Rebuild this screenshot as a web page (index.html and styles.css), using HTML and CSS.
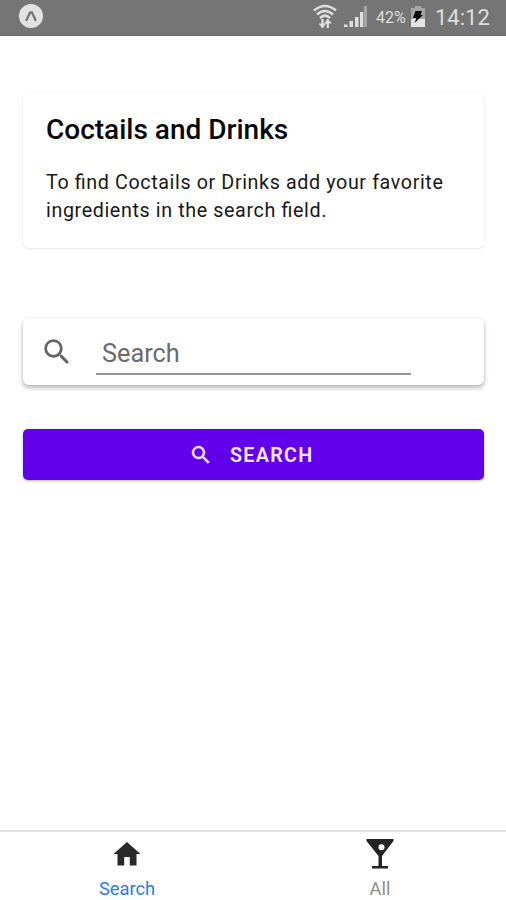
FILE: index.html
```html
<!DOCTYPE html>
<html lang="en">
<head>
<meta charset="utf-8">
<title>Coctails and Drinks</title>
<link rel="stylesheet" href="styles.css">
</head>
<body>
<div class="app">
  <header class="status">
    <svg class="logo" width="26" height="26" viewBox="0 0 26 26"><circle cx="13" cy="13" r="12" fill="#e2e2e2"/><path d="M8.500 17 12 9.500h2L17.500 17" fill="none" stroke="#757575" stroke-width="2.300" stroke-linecap="round" stroke-linejoin="round"/></svg>
    <svg class="wifi" width="24" height="26" viewBox="0 0 24 26" fill="none" stroke="#dedede" stroke-width="2.600"><path d="M1 6.500Q12-2.500 23 6.500M4 10.500q8-7 16 0M7 14q5-4.600 10 0"/><path d="M9.500 15v8M14.800 24v-8" stroke-width="2.300"/><path d="m5.500 19.500 4 5 3.500-5zM11.300 19.500l3.500-5 4 5z" fill="#dedede" stroke="none"/></svg>
    <svg class="signal" width="24" height="22" viewBox="0 0 24 22" fill="#dedede"><path d="M0 18.500h3.500V21H0zM5.500 15h3.500v6H5.500zM11 11h3.500v10H11zM16 6h3.300v15H16z"/><path d="M19.800 0H23v21h-3.200z" fill="#a5a5a5"/></svg>
    <span class="percent">42%</span>
    <svg class="battery" width="16" height="22" viewBox="0 0 16 22"><path d="M5 0h6v2h4v19H1V2h4z" fill="#a5a5a5"/><path d="M1 13h14v8H1z" fill="#e4e4e4"/><path d="M5.500 5H12l-1.500 4H13L4.500 17l2-5H3z" fill="#080808"/></svg>
    <span class="clock">14:12</span>
  </header>
  <main class="content">
    <section class="card">
      <h1 class="title">Coctails and Drinks</h1>
      <p class="text">To find Coctails or Drinks add your favorite<br>ingredients in the search field.</p>
    </section>
    <div class="searchbar">
      <svg width="34" height="34" viewBox="0 0 24 24" fill="#666"><path d="M15.5 14h-.79l-.28-.27A6.47 6.47 0 0 0 16 9.5 6.5 6.5 0 1 0 9.5 16c1.61 0 3.09-.59 4.23-1.57l.27.28v.79l5 4.99L20.49 19zm-6 0C7.01 14 5 11.99 5 9.5S7.01 5 9.5 5 14 7.01 14 9.5 11.99 14 9.5 14z"/></svg>
      <div class="field">Search</div>
    </div>
    <div class="button" role="button">
      <svg width="24" height="24" viewBox="0 0 24 24" fill="#f1e8ff" stroke="#f1e8ff" stroke-width=".5"><path d="M15.5 14h-.79l-.28-.27A6.47 6.47 0 0 0 16 9.5 6.5 6.5 0 1 0 9.5 16c1.61 0 3.09-.59 4.23-1.57l.27.28v.79l5 4.99L20.49 19zm-6 0C7.01 14 5 11.99 5 9.5S7.01 5 9.5 5 14 7.01 14 9.5 11.99 14 9.5 14z"/></svg>
      <span class="label">SEARCH</span>
    </div>
  </main>
  <nav class="tabs">
    <div class="tab active">
      <svg width="30" height="32" viewBox="0 0 30 32" fill="#292929"><path d="M15 4 1.500 16h4v11.500h6.700V19h5.600v8.500h6.700V16h4z"/></svg>
      <span class="name">Search</span>
    </div>
    <div class="tab">
      <svg width="30" height="32" viewBox="0 0 30 32" fill="#242424"><path d="M1.500 1h27v2L17 18v10h6v2.500H7V28h6.500V18L1.500 3z"/><circle cx="16.500" cy="9.200" r="3" fill="#fff"/></svg>
      <span class="name">All</span>
    </div>
  </nav>
</div>
</body>
</html>
```
FILE: styles.css
```css
* { box-sizing: border-box; }
body { margin: 0; background: #fff; font-family: Roboto, sans-serif; }
.app { height: 900px; display: flex; flex-direction: column; overflow: hidden; }
.status { height: 36px; flex: none; display: flex; align-items: center; padding: 0 16px 2px 18px; background: #757575; border-bottom: 1px solid #656565; color: #dedede; }
.logo { margin-top: -1px; }
.wifi { margin-left: auto; }
.signal { margin: 1px 0 0 7px; }
.percent { width: 31px; margin-left: 8px; font-size: 16px; white-space: nowrap; padding-top: 1px; }
.battery { margin-left: 3px; }
.clock { width: 55px; margin-left: 9px; padding-top: 1px; font-size: 22px; white-space: nowrap; }
.content { flex: 1; padding: 57px 22px 0 23px; }
.card { height: 155px; padding: 20px 23px; border-radius: 6px; box-shadow: 0 0 2px rgba(0,0,0,.1), 0 1px 2px rgba(0,0,0,.08); }
.title { margin: 0; font-size: 28px; line-height: 34px; font-weight: 500; letter-spacing: 0; color: #080808; white-space: nowrap; }
.text { margin: 22px 0 0; font-size: 19.7px; line-height: 28px; letter-spacing: .62px; font-feature-settings: "liga" 1; color: #181818; white-space: nowrap; }
.searchbar { height: 67px; margin-top: 70px; padding: 0 73px 0 17px; display: flex; align-items: center; border-radius: 6px; box-shadow: 0 0 2px rgba(0,0,0,.12), 0 3px 5px rgba(0,0,0,.27); }
.field { flex: 1; height: 44px; margin-left: 22px; padding-left: 6px; border-bottom: 2px solid #929292; font-size: 25.3px; line-height: 46px; color: #6b6b6b; position: relative; top: 1px; }
.button { height: 51px; margin-top: 44px; display: flex; align-items: center; padding-left: 166px; border-radius: 5px; background: #6200ee; box-shadow: 0 1px 3px rgba(0,0,0,.3); color: #f1e8ff; }
.label { margin-left: 17px; font-size: 19.7px; font-weight: 600; letter-spacing: 1.3px; line-height: 26px; padding-top: 2px; }
.tabs { height: 70px; flex: none; display: flex; border-top: 2px solid #e3e3e3; }
.tab { flex: 1; display: flex; flex-direction: column; align-items: center; padding: 6px 0 0 1px; color: #8e8e8e; }
.active { color: #2680f5; }
.name { margin-top: 8px; font-size: 18.3px; line-height: 22px; }
```
